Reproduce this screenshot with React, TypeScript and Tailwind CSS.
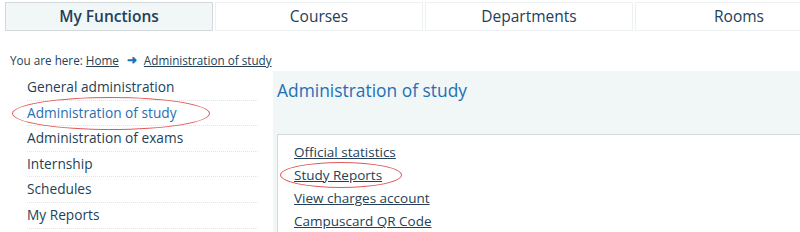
import React from "react";

const font = { fontFamily: '"Open Sans", "Noto Sans", sans-serif' };

export default function App() {
  const tabs = ["My Functions", "Courses", "Departments", "Rooms"];
  const nav = [
    "General administration",
    "Administration of study",
    "Administration of exams",
    "Internship",
    "Schedules",
    "My Reports",
  ];
  const links = ["Official statistics", "Study Reports", "View charges account", "Campuscard QR Code"];
  return (
    <div className="w-[800px] h-[232px] overflow-hidden bg-white text-[#243f57]" style={font}>
      <div className="flex gap-[2px] pl-[5px] pt-[2px] w-[1040px]">
        {tabs.map((t, i) => (
          <div
            key={t}
            className={
              "w-[208px] h-[29px] flex items-center justify-center text-[15.5px] " +
              (i === 0
                ? "bg-[#f1f6f7] border border-[#d3d8da] font-semibold text-[#22405a]"
                : "bg-white border border-[#eef1f1] text-[#22405a]")
            }
          >
            {t}
          </div>
        ))}
      </div>
      <div className="pl-[10px] pt-[20px] text-[11.7px] leading-[18px] flex items-center">
        <span>You are here:&nbsp;</span>
        <span className="underline">Home</span>
        <span className="text-[#1f6fb2] ml-[8px] mr-[7px] text-[12px] font-bold">➜</span>
        <span className="underline">Administration of study</span>
      </div>
      <div className="flex mt-[2px]">
        <div className="w-[258px] pl-[27px] pt-[4px] shrink-0">
          {nav.map((n, i) => (
            <div
              key={n}
              className={
                "relative h-[25.6px] flex items-center text-[13.7px] border-b border-dotted border-[#dde3e6] " +
                (i === 1 ? "text-[#1f70b5]" : "text-[#243f57]")
              }
            >
              {n}
              {i === 1 && (
                <div className="absolute left-[-15px] top-[-4px] w-[198px] h-[33px] rounded-[50%] border border-[#e05a5a]" />
              )}
            </div>
          ))}
        </div>
        <div className="flex-1 ml-[15px] bg-[#f1f6f7] pl-[4px] pt-[7px]">
          <div className="text-[17.4px] text-[#1f70b5] leading-[24px]">Administration of study</div>
          <div className="mt-[32px] bg-white border-l border-t border-[#d6dadc] pl-[16px] pt-[5px] h-[120px]">
            {links.map((l, i) => (
              <div key={l} className="relative h-[23.3px] flex items-center text-[13.5px] text-[#243f57]">
                <span className="underline">{l}</span>
                {i === 1 && (
                  <div className="absolute left-[-14px] top-[-1px] w-[122px] h-[26px] rounded-[50%] border border-[#e05a5a]" />
                )}
              </div>
            ))}
          </div>
        </div>
      </div>
    </div>
  );
}
